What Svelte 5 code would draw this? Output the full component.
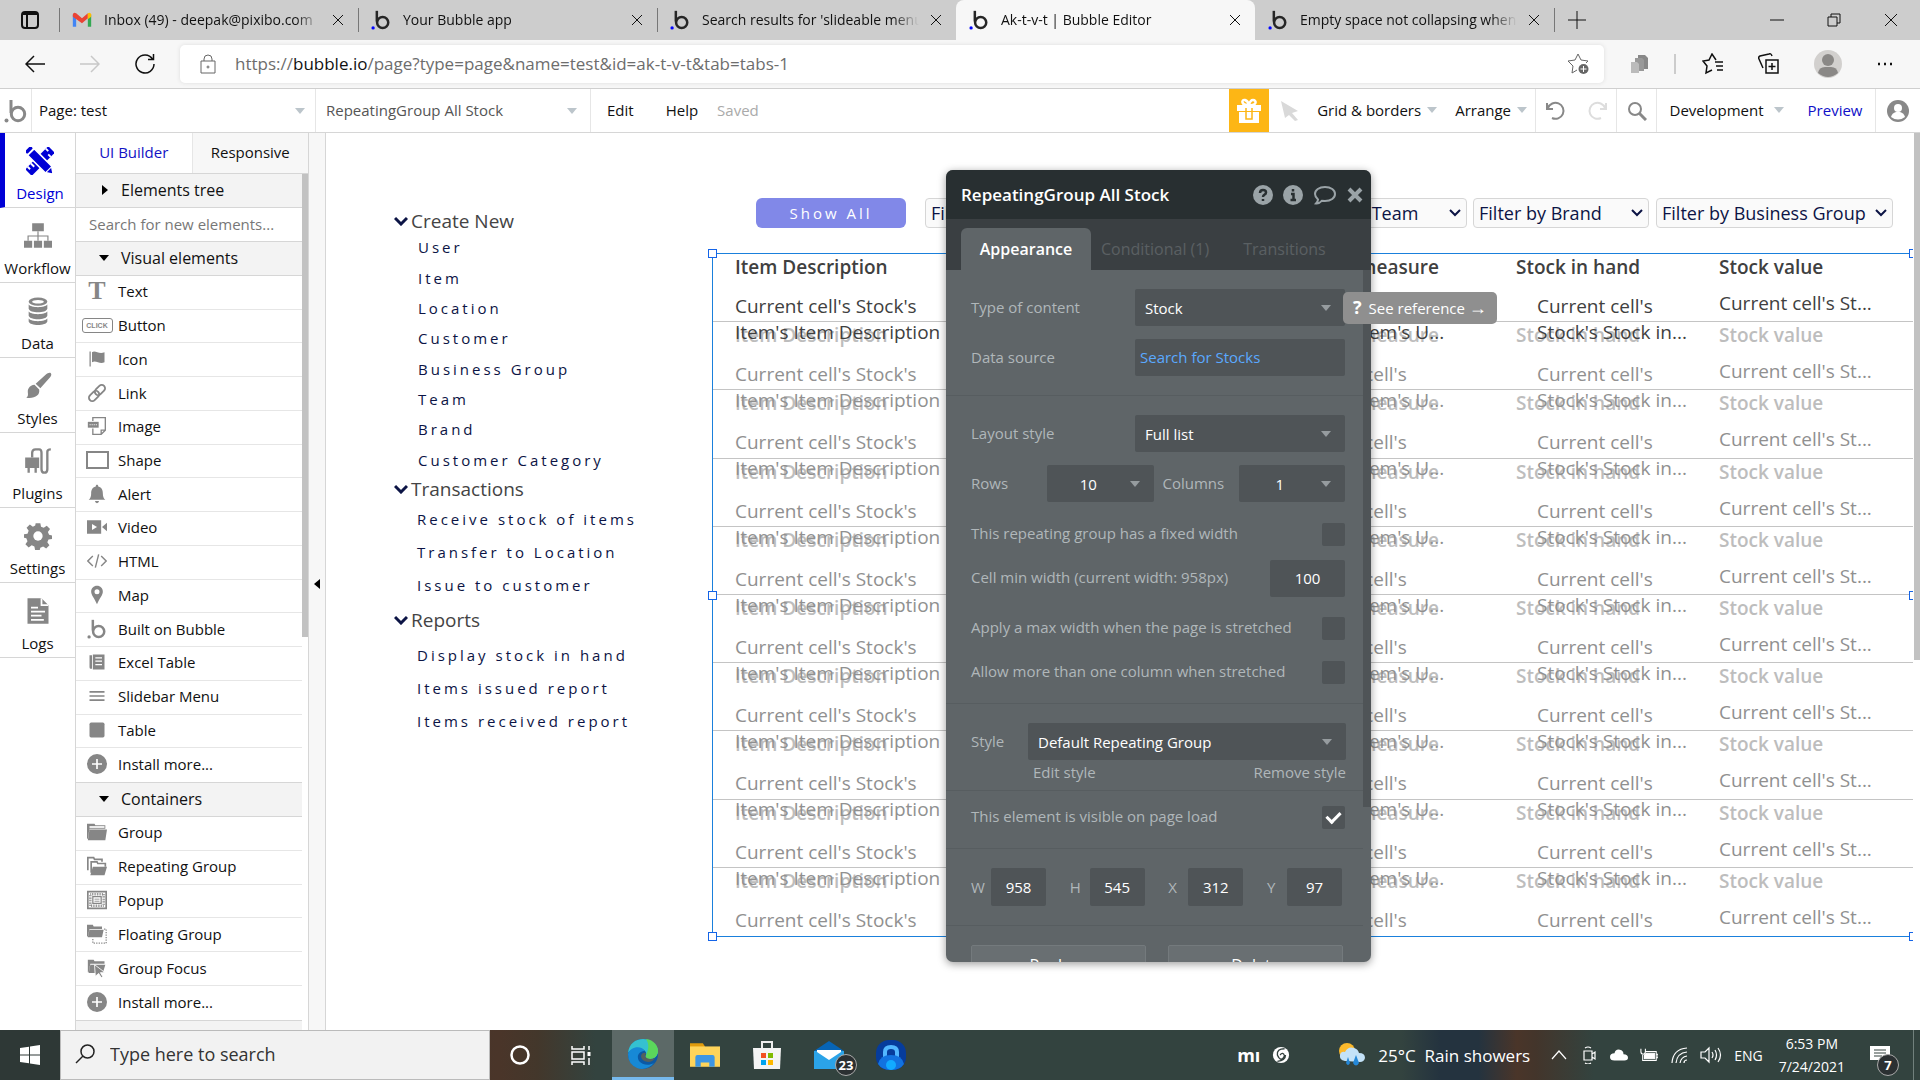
<script>
	const browserTabs = [
		{ icon: "gmail", title: "Inbox (49) - deepak@pixibo.com" },
		{ icon: "bubble", title: "Your Bubble app" },
		{ icon: "bubble", title: "Search results for 'slideable menu" },
		{ icon: "bubble", title: "Ak-t-v-t | Bubble Editor", active: true },
		{ icon: "bubble", title: "Empty space not collapsing when", plain: true },
	];

	const sections = ["Design", "Workflow", "Data", "Styles", "Plugins", "Settings", "Logs"];

	const visualElements = [
		"Text",
		"Button",
		"Icon",
		"Link",
		"Image",
		"Shape",
		"Alert",
		"Video",
		"HTML",
		"Map",
		"Built on Bubble",
		"Excel Table",
		"Slidebar Menu",
		"Table",
		"Install more...",
	];

	const containers = [
		"Group",
		"Repeating Group",
		"Popup",
		"Floating Group",
		"Group Focus",
		"Install more...",
	];

	const menu = [
		{
			name: "Create New",
			size: "small",
			items: [
				"User",
				"Item",
				"Location",
				"Customer",
				"Business Group",
				"Team",
				"Brand",
				"Customer Category",
			],
		},
		{
			name: "Transactions",
			size: "medium",
			items: ["Receive stock of items", "Transfer to Location", "Issue to customer"],
		},
		{
			name: "Reports",
			size: "large",
			items: ["Display stock in hand", "Items issued report", "Items received report"],
		},
	];

	const columns = [
		{ name: "Item Description", kind: "item", lines: ["Current cell's Stock's", "Item's Item Description"] },
		{ name: "Unit of measure", kind: "unit", lines: ["Current cell's", "Stock's Item's U..."] },
		{ name: "Stock in hand", kind: "hand", lines: ["Current cell's", "Stock's Stock in..."] },
		{ name: "Stock value", kind: "value", lines: ["Current cell's St..."] },
	];

	// all drawn in a 24x24 box
	const glyphs = {
		Design:
			'<g transform="rotate(45 12 12)"><path d="M8 -2h8v28H8z"/><path d="M8 1h3M8 19h4M8 23h3M16 3h-3" stroke="#fff" stroke-width="1.6"/></g><g transform="rotate(-45 12 12)"><path d="M8 1h8v21l-4 6-4-6z" stroke="#fff" stroke-width="1.4"/><path d="M8 22.500h8" stroke="#fff"/><rect x="8.500" y="-3" width="7" height="3" rx="1"/></g>',
		Workflow:
			'<path d="M7 1h10v7H7zM0 16h7v6H0zM8.500 16h7v6h-7zM17 16h7v6h-7z"/><path d="M12 8v8M3.500 16v-4h17v4" fill="none" stroke="currentColor"/>',
		Data: '<ellipse cx="12" cy="4" rx="8" ry="3.500"/><ellipse cx="12" cy="4" rx="5" ry="1.500" fill="#fff"/><path d="M4 6.500c2 3 14 3 16 0v3.500c-1 4-15 4-16 0zM4 12.500c2 3 14 3 16 0V16c-1 4-15 4-16 0zM4 18.500c2 3 14 3 16 0V21c-1 4-15 4-16 0z"/>',
		Styles:
			'<path d="M23 1c1 1 0 3-1 4l-8 9-4-4 9-8c1-1 3-2 4-1zM9 11l4 4c1 5-4 8-11 7 3-2 0-5 2-8 1-2 3-3 5-3z"/>',
		Plugins:
			'<path d="M1 9h12v9h-2v4H9v-4H5v4H3v-4H1z"/><path d="M7 9V5q0-3 3-3h3q2 0 2 3v14q0 3 2.500 3t2.500-3V4q0-2 3-2" fill="none" stroke="currentColor" stroke-width="2"/>',
		Settings:
			'<path d="M10 1h4l.6 3 2.300 1 2.600-1.800 2.800 2.800L20.500 8.600l1 2.400 2.500.5v3l-3 .6-1 2.300 1.800 2.600-2.800 2.800-2.600-1.800-2.400 1-.5 2h-4l-.6-3-2.300-1L4 21.800 1.200 19 3 16.400 2 14 0 13.500v-3L3 10l1-2.400L2.200 5 5 2.200 7.600 4l2-1z"/><circle cx="12" cy="12" r="4" fill="#fff"/>',
		Logs: '<path d="M3 1h12l6 6v16H3z"/><path d="M15 1v6h6M6 9h6M6 12.500h12M6 16h9M6 19.500h11" fill="none" stroke="#fff" stroke-width="1.500"/>',
		Icon: '<path d="M3 3h1.500v18H3zM6 4c4-3 8 3 15 0v12c-6 3-10-3-15 0z"/>',
		Link: '<g fill="none" stroke="currentColor" stroke-width="2.200" transform="rotate(-45 12 12)"><rect x="0" y="8" width="14" height="8" rx="4"/><rect x="10" y="8" width="14" height="8" rx="4"/></g>',
		Image:
			'<path d="M7 6V2h15v15l-5 5H7v-7M17 22v-5h5" fill="none" stroke="currentColor" stroke-width="1.600"/><path d="M1 7h13v7H1z"/><path d="M3 10.500h9" stroke="#fff" stroke-dasharray="1.500 1"/>',
		Alert: '<path d="M12 1c1 0 1.500.7 1.500 2C18 4 19 8 19 11c0 4 1 6 3 8H2c2-2 3-4 3-8 0-3 1-7 5.500-8 0-1.300.5-2 1.500-2zM9.500 20.500h5q-.5 2.500-2.500 2.500t-2.500-2.500z"/>',
		Video:
			'<path d="M0 4h17v16H0zM18 12l6-5v10z"/><path d="M6 8.500l6 3.500-6 3.500z" fill="#fff"/>',
		HTML: '<path d="M7 6L1 12l6 6M17 6l6 6-6 6M14 4l-4 16" fill="none" stroke="currentColor" stroke-width="1.700"/>',
		Map: '<path fill-rule="evenodd" d="M12 1c4 0 7 3 7 7 0 4-4 8-7 15C9 16 5 12 5 8c0-4 3-7 7-7zm0 4a3 3 0 100 6 3 3 0 000-6z"/>',
		bubble:
			'<path d="M7 1v13" stroke="currentColor" stroke-width="3" fill="none"/><circle cx="14" cy="15" r="6.700" stroke="currentColor" stroke-width="3" fill="none"/><circle class="dot" cx="2.500" cy="21.500" r="2"/>',
		"Excel Table":
			'<path d="M3 4h3v16H4q-1 0-1-2zM7 3h14v18H7z"/><path d="M10 7h8M10 11h8M10 15h8" stroke="#fff" stroke-width="1.500"/>',
		"Slidebar Menu": '<path d="M3 6h18v2H3zM3 11h18v2H3zM3 16h18v2H3z"/>',
		Table: '<rect x="3" y="3" width="18" height="18" rx="2"/>',
		"Install more...":
			'<circle cx="12" cy="12" r="12"/><path d="M12 6v12M6 12h12" stroke="#fff" stroke-width="2"/>',
		Group: '<path d="M0 2h9l1 2h12v4H3L1 20H0zM3 9h21l-2 13H1z"/><path d="M3 5h18v2H3z" fill="#fff"/>',
		"Repeating Group":
			'<path d="M1 17V2h7l1 2h9v3M5 20V7h7l1 2h9v4" fill="none" stroke="currentColor" stroke-width="2"/><path d="M7 13h17l-3 10H4z"/>',
		Popup:
			'<path d="M1 2h22v20H1z" fill="none" stroke="currentColor" stroke-width="2"/><path d="M4 5h16v14H4z" fill="none" stroke="currentColor" stroke-width="3" stroke-dasharray="1 1"/><path d="M7 8h10v8H7z" fill="#fff" stroke="currentColor" stroke-width="1.500"/><path d="M9 11h6M9 13.500h6" stroke="currentColor"/>',
		"Floating Group":
			'<path d="M0 1h7l1 2h10v3H3L1 15H0zM3 7h17l-2 9H1z"/><path d="M7 18v5h16V6h-3" fill="none" stroke="currentColor" stroke-width="1.500" stroke-dasharray="1.500 1.500"/>',
		"Group Focus":
			'<path d="M1 2h7l1 2h12v3H4L2 17H1zM4 8h18l-3 10H2z"/><path d="M9 8l12 9-5 .5 3 5-2 1-3-5-4 3.500z" stroke="#fff"/>',
		gmail:
			'<path d="M1 6v14h4V10z" fill="#4285f4"/><path d="M23 6v14h-4V10z" fill="#34a853"/><path d="M1 5q1-3 4-1l7 6 7-6v6l-7 6L1 8z" fill="#ea4335"/><path d="M19 4q3-2 4 1v3l-4 3z" fill="#fbbc04"/>',
	};

	const settings = [
		{ id: "fixed", label: "This repeating group has a fixed width" },
		{ id: "max", label: "Apply a max width when the page is stretched" },
		{ id: "more", label: "Allow more than one column when stretched" },
	];

	let section = $state("Design");
	let search = $state("");
	let visible = $state(true);
	let checks = $state({ fixed: false, max: false, more: false });
	let minWidth = $state("100");
	let box = $state({ W: "958", H: "545", X: "312", Y: "97" });
</script>

{#snippet glyph(name, cls = "")}
	<svg class="glyph {cls}" viewBox="0 0 24 24" aria-hidden="true">{@html glyphs[name]}</svg>
{/snippet}

{#snippet elementRow(name)}
	<li>
		<span class="element-icon">
			{#if name === "Text"}
				<b class="letter-t">T</b>
			{:else if name === "Button"}
				<b class="click">CLICK</b>
			{:else if name === "Shape"}
				<i class="shape"></i>
			{:else if name === "Built on Bubble"}
				{@render glyph("bubble")}
			{:else}
				{@render glyph(name)}
			{/if}
		</span>
		{name}
	</li>
{/snippet}

{#snippet dropdown(id, value, cls = "")}
	<span class="dropdown {cls}">
		<select {id} aria-label={value}><option>{value}</option></select>
	</span>
{/snippet}

{#snippet check(id)}
	<label class="setting" for={id}>
		<span>{settings.find((s) => s.id === id).label}</span>
		<input type="checkbox" {id} bind:checked={checks[id]} />
	</label>
{/snippet}

{#snippet filter(name, cls)}
	<span class="filter {cls}">
		<select aria-label={name}><option>{name}</option></select>
		<svg viewBox="0 0 12 8"><path d="M1 1l5 5 5-5" /></svg>
	</span>
{/snippet}

<div class="app">
	<header class="tab-strip">
		<svg class="tab-actions" viewBox="0 0 20 20"><rect x="2" y="2" width="16" height="16" rx="3" /><path d="M2 4h16M7 5v13" /></svg>
		{#each browserTabs as tab}
			<div class="tab" class:active={tab.active} class:plain={tab.plain}>
				{@render glyph(tab.icon, "favicon")}
				<span class="tab-title">{tab.title}</span>
				<button class="icon-button" aria-label="Close tab">
					<svg class="close" viewBox="0 0 10 10"><path d="M0 0l10 10M10 0L0 10" /></svg>
				</button>
			</div>
		{/each}
		<button class="icon-button new-tab" aria-label="New tab">
			<svg viewBox="0 0 18 18"><path d="M9 0v18M0 9h18" /></svg>
		</button>
		<div class="window-controls">
			<svg viewBox="0 0 14 14"><path d="M0 7h14" /></svg>
			<svg viewBox="0 0 14 14"><path d="M1 4h9v9H1zM4 4V1h9v9h-3" /></svg>
			<svg viewBox="0 0 14 14"><path d="M1 1l12 12M13 1L1 13" /></svg>
		</div>
	</header>

	<div class="browser-bar">
		<button class="icon-button" aria-label="Back"><svg class="nav" viewBox="0 0 20 20"><path d="M20 10H1M9 2l-8 8 8 8" /></svg></button>
		<button class="icon-button faded" aria-label="Forward"><svg class="nav" viewBox="0 0 20 20"><path d="M0 10h19M11 2l8 8-8 8" /></svg></button>
		<button class="icon-button" aria-label="Reload"><svg class="nav" viewBox="0 0 20 20"><path d="M17.500 5a9 9 0 101.500 5M18.500 0v5.500H13" /></svg></button>
		<div class="address">
			<svg class="lock" viewBox="0 0 16 20"><path d="M1 7h14v12H1zM4 7V5a4 4 0 018 0v2" /><circle cx="8" cy="13" r="1" /></svg>
			<span class="url">https://<b>bubble.io</b>/page?type=page&amp;name=test&amp;id=ak-t-v-t&amp;tab=tabs-1</span>
			<svg class="star-add" viewBox="0 0 22 22"><path d="M9 17l-5 3 1-7-5-5 7-1 3-6 3 6 7 1-2 2" /><circle cx="15.500" cy="16" r="5" class="solid" /><path class="plus" d="M15.500 13v6M12.500 16h6" /></svg>
		</div>
		<div class="browser-tools">
			<svg class="copies" viewBox="0 0 20 20"><path d="M8 1h7l3 3v11H8z" fill="#888" /><path d="M5 4h7l2 2v11H5z" fill="#999" /><path d="M1 8h6l2 2v9H1z" fill="#bbb" /></svg>
			<i class="divider"></i>
			<svg viewBox="0 0 22 22"><path d="M14 7l-4-6-3 6-6 1 4 5-1 7 6-3M13 9h8M14 13h7M15 17h6" /></svg>
			<svg viewBox="0 0 22 22"><path d="M8 7h12v13H8zM14 10v7M10.500 13.500h7M5 15L1 6q-1-2 1-3l9-2q2-1 3 2" /></svg>
			<svg class="avatar" viewBox="0 0 28 28"><circle cx="14" cy="14" r="14" fill="#d2d0ce" /><circle cx="14" cy="10" r="6" fill="#8a8886" /><path d="M4 23q1-6 7-6h6q6 0 7 6-10 8-20 0z" fill="#8a8886" /></svg>
			<svg viewBox="0 0 22 22"><path d="M4 11h2M10 11h2M16 11h2" stroke-width="2.500" /></svg>
		</div>
	</div>

	<div class="editor-bar">
		<span class="logo">{@render glyph("bubble")}</span>
		<span class="picker page">{@render dropdown("page", "Page: test")}</span>
		<span class="picker element">{@render dropdown("element", "RepeatingGroup All Stock")}</span>
		<nav class="menus">
			<a href="#edit">Edit</a>
			<a href="#help">Help</a>
			<span class="saved">Saved</span>
		</nav>
		<div class="editor-tools">
			<span class="gift"><svg viewBox="0 0 26 26"><path d="M1 7h24v6H1zM3 14h20v11H3z" fill="#fff" /><path d="M13 7C5 8 5 1 9 2q3 1 4 5c1-4 2-5 4-5 4 0 4 6-4 5" fill="none" stroke="#fff" stroke-width="2.500" /><path d="M10 10v11h6V10" fill="none" stroke="#fdb615" stroke-width="1.500" /></svg></span>
			<svg class="cursor" viewBox="0 0 18 20"><path d="M0 0l17 10-6 2 6 7-3 1-6-6-4 3z" fill="#d9d9d9" /></svg>
			<button class="text-button grid-menu">Grid &amp; borders</button>
			<button class="text-button arrange-menu">Arrange</button>
			<span class="tool-cell undo">
				<svg viewBox="0 0 20 20"><path d="M2 7a8 8 0 11 4 10M1 2v6h6" /></svg>
				<svg class="redo" viewBox="0 0 20 20"><path d="M18 7a8 8 0 10-4 10M19 2v6h-6" /></svg>
			</span>
			<span class="tool-cell find"><svg viewBox="0 0 20 20"><circle cx="8" cy="8" r="6" /><path d="M12 12l7 7" stroke-width="3" /></svg></span>
			<span class="tool-cell version">
				<button class="text-button development">Development</button>
				<a class="preview" href="#preview">Preview</a>
			</span>
			<span class="tool-cell account"><svg viewBox="0 0 22 22"><circle cx="11" cy="11" r="11" fill="#888" stroke="none" /><circle cx="11" cy="8" r="4" fill="#fff" stroke="none" /><path d="M4 17q1-4 5-5h4q4 1 5 5-7 5-14 0z" fill="#fff" stroke="none" /></svg></span>
		</div>
	</div>

	<div class="workspace">
		<nav class="sections">
			{#each sections as name}
				<button class="section" class:current={section === name} onclick={() => (section = name)}>
					{@render glyph(name)}
					{name}
				</button>
			{/each}
		</nav>

		<aside class="palette">
			<div class="palette-tabs">
				<button class="chosen">UI Builder</button>
				<button>Responsive</button>
			</div>
			<div class="palette-body">
				<div class="palette-list">
					<h2 class="closed">Elements tree</h2>
					<input class="search" type="text" aria-label="Search" placeholder="Search for new elements..." bind:value={search} />
					<h2>Visual elements</h2>
					<ul class="visual">
						{#each visualElements as name}
							{@render elementRow(name)}
						{/each}
					</ul>
					<h2 class="ruled">Containers</h2>
					<ul class="containers">
						{#each containers as name}
							{@render elementRow(name)}
						{/each}
					</ul>
					<h2 class="ruled">Input forms</h2>
				</div>
				<div class="rail"><i></i></div>
			</div>
		</aside>
		<button class="collapse" aria-label="Collapse panel"></button>

		<main class="canvas">
			<nav class="app-menu">
				{#each menu as group}
					<h3 class={group.size}>
						<svg viewBox="0 0 14 10"><path d="M1 2l6 6 6-6" /></svg>
						{group.name}
					</h3>
					<ul class={group.size}>
						{#each group.items as item}
							<li>{item}</li>
						{/each}
					</ul>
				{/each}
			</nav>

			<div class="stock">
				<div class="filters">
					<button class="show-all">Show All</button>
					{@render filter("Filter by Location", "location")}
					{@render filter("Filter by Team", "team")}
					{@render filter("Filter by Brand", "brand")}
					{@render filter("Filter by Business Group", "business")}
				</div>
				<div class="repeating-group">
					{#each Array(10) as _, i}
						<div class="cell" class:ghost={i > 0}>
							{#each columns as column}
								<div class="column {column.kind}">
									<strong>{column.name}</strong>
									<p>
										{#each column.lines as line}
											<span>{line}</span>
										{/each}
									</p>
								</div>
							{/each}
						</div>
					{/each}
					<i class="handle top left"></i>
					<i class="handle middle left"></i>
					<i class="handle bottom left"></i>
					<i class="handle top right"></i>
					<i class="handle middle right"></i>
					<i class="handle bottom right"></i>
				</div>
			</div>
			<div class="canvas-rail"></div>

			<section class="editor">
				<header>
					<h1>RepeatingGroup All Stock</h1>
					<svg viewBox="0 0 20 20"><circle cx="10" cy="10" r="10" /><path class="cut" d="M7 8q0-3 3-3t3 2.500q0 1.500-1.500 2.200T10 12M10 14v2" /></svg>
					<svg viewBox="0 0 20 20"><circle cx="10" cy="10" r="10" /><path class="cut" d="M10 4v2.500M8 9h2.500v6M7.500 15h5.500" /></svg>
					<svg class="comment" viewBox="0 0 24 20"><path d="M12 2c6 0 10 3 10 7s-4 7-10 7l-3-.3Q6 19 3 18.500q2-2 2-4Q2 12 2 9c0-4 4-7 10-7z" /></svg>
					<button class="icon-button" aria-label="Close editor"><svg class="dismiss" viewBox="0 0 16 16"><path d="M2 2l12 12M14 2L2 14" /></svg></button>
				</header>
				<div class="editor-tabs">
					<button class="chosen">Appearance</button>
					<button>Conditional (1)</button>
					<button>Transitions</button>
				</div>
				<div class="editor-body">
					<div class="fields">
						<div class="block source">
							<div class="field"><label for="type">Type of content</label>{@render dropdown("type", "Stock")}</div>
							<div class="field"><span>Data source</span><a class="expression" href="#source">Search for Stocks</a></div>
						</div>
						<div class="block layout">
							<div class="field"><label for="layout">Layout style</label>{@render dropdown("layout", "Full list")}</div>
							<div class="field pair">
								<label for="rows">Rows</label>{@render dropdown("rows", "10", "count")}
								<label for="cols">Columns</label>{@render dropdown("cols", "1", "count")}
							</div>
							{@render check("fixed")}
							<div class="setting min-width">
								<label for="min">Cell min width (current width: 958px)</label>
								<input id="min" type="text" bind:value={minWidth} />
							</div>
							{@render check("max")}
							{@render check("more")}
						</div>
						<div class="block style-block">
							<div class="field"><label for="style">Style</label>{@render dropdown("style", "Default Repeating Group", "wide")}</div>
							<div class="style-links"><a href="#edit-style">Edit style</a><a href="#remove-style">Remove style</a></div>
						</div>
						<div class="block visibility">
							<label class="setting" for="visible">
								<span>This element is visible on page load</span>
								<input type="checkbox" id="visible" bind:checked={visible} />
							</label>
						</div>
						<div class="block size">
							{#each Object.keys(box) as key}
								<label>{key}<input type="text" bind:value={box[key]} /></label>
							{/each}
						</div>
						<div class="block actions">
							<button>Replace</button>
							<button>Delete</button>
						</div>
					</div>
				</div>
			</section>
			<div class="tooltip"><b>?</b>See reference <span>→</span></div>
		</main>
	</div>

	<footer class="taskbar">
		<button class="start" aria-label="Start"><svg viewBox="0 0 20 20"><path d="M0 3l9-1.300V9.500H0zM10 1.500L20 0v9.500H10zM0 10.500h9v7.800L0 17zM10 10.500h10V20l-10-1.500z" /></svg></button>
		<label class="task-search">
			<svg viewBox="0 0 20 20"><circle cx="12.500" cy="7.500" r="6.500" /><path d="M8 12l-7 7" /></svg>
			<input type="text" aria-label="Search Windows" placeholder="Type here to search" />
		</label>
		<div class="apps">
			<span class="task-app"><svg viewBox="0 0 24 24"><circle cx="12" cy="12" r="8.500" fill="none" stroke="#fff" stroke-width="2.500" /></svg></span>
			<span class="task-app"><svg viewBox="0 0 24 24" fill="none" stroke="#fff" stroke-width="1.500"><path d="M3 3v3h12V3M3 9h12v7H3zM3 22v-3h12v3M20 3v4M20 15v7" /><path d="M20 9v4" stroke-width="3" /></svg></span>
			<span class="task-app open">
				<svg viewBox="0 0 30 30">
					<circle cx="15" cy="15" r="15" fill="#0c59a4" />
					<path d="M0 14C1 5 7 0 15 0s15 6 15 12c0 5-4 8-8 8s-5-2-4-4-1-6-6-6-10 1-12 4z" fill="#35c1d0" />
					<path d="M18 0c8 1 12 7 12 12 0 5-4 8-8 8s-5-2-4-4c2-4 4-10 0-16z" fill="#5bd75b" />
					<path d="M0 15c2-8 14-9 17-3-6 0-9 5-6 10 3 4 10 5 15 2-5 6-12 7-17 5Q0 25 0 15z" fill="#1789d6" />
					<path d="M18 14q-3 5 4 6 3 0 5-1-2 4-7 4-7-1-7-6 1-4 5-3z" fill="#54615f" />
				</svg>
			</span>
			<span class="task-app"><svg viewBox="0 0 28 28"><path d="M0 3h12l2 3v4H0z" fill="#e19b0c" /><path d="M0 6h28v19H0z" fill="#ffd45a" /><path d="M5 25v-9q0-2 2-2h14q2 0 2 2v9h-5v-4h-8v4z" fill="#3d96e4" /></svg></span>
			<span class="task-app"><svg viewBox="0 0 30 30"><path d="M10 9V2h10v7" fill="none" stroke="#eee" stroke-width="2" /><path d="M1 8h28l-1 21H2z" fill="#f4f4f4" /><path d="M9 13h5v5H9z" fill="#f25022" /><path d="M16 13h5v5h-5z" fill="#7fba00" /><path d="M9 20h5v5H9z" fill="#00a4ef" /><path d="M16 20h5v5h-5z" fill="#ffb900" /></svg></span>
			<span class="task-app">
				<svg viewBox="0 0 30 30"><path d="M0 11L15 1l15 10z" fill="#0764b5" /><path d="M0 11h30v18H0z" fill="#2ba3e8" /><path d="M3 10h24v2L15 20 3 12z" fill="#fff" /></svg>
				<b class="count-badge">23</b>
			</span>
			<span class="task-app"><svg viewBox="0 0 30 30"><rect width="30" height="30" rx="13" fill="#063c9c" /><path d="M7 17v-5q0-7 8-7t8 7v5h-4v-5q0-3-4-3t-4 3v5z" fill="#52b7ff" /><path d="M2 24q2-9 13-9t13 9q-4 6-13 6T2 24z" fill="#1272e0" /><circle cx="15" cy="25" r="5" fill="#12aaff" /></svg></span>
		</div>
		<div class="tray">
			<b class="mi">mı</b>
			<svg class="swirl" viewBox="0 0 20 20"><circle cx="10" cy="10" r="9" fill="#fff" /><path d="M14 3q-9 0-8 7 4 9 8 1-2-5-5-1M6 17q9-1 9-7" fill="none" stroke="#34423f" stroke-width="1.500" /></svg>
			<svg class="weather" viewBox="0 0 28 24"><circle cx="9" cy="8" r="8" fill="#fcb92c" /><path d="M7 18q-6-1-5-6 1-4 5-3 3-6 9-4 4 1 5 5 6 0 6 5-1 4-5 4z" fill="#c4e2f8" /><path d="M10 14l-2 6q2 4 4 0zM18 12l-3 8q3 5 6 0z" fill="#2588d8" /></svg>
			<span class="forecast">25°C&nbsp; Rain showers</span>
			<svg viewBox="0 0 18 18"><path d="M2 13l7-8 7 8" /></svg>
			<svg viewBox="0 0 18 18"><path d="M4 5h8v9H4zM12 8l3-2v7l-3-2M5 2q3-2 6 0M5 17q3 2 6 0" /></svg>
			<svg class="cloud" viewBox="0 0 20 18"><path d="M5 15q-5 0-5-4t5-4q1-5 6-4 4 1 4 5 5 0 5 4 0 3-4 3z" fill="#fff" stroke="none" /></svg>
			<svg viewBox="0 0 20 18"><path d="M6 5h12v10H3V9M1 2v3q0 3 2.500 3T6 5V2M18 8h2v4h-2" /><path d="M7 7h9v6H5V9z" fill="#fff" /></svg>
			<svg viewBox="0 0 18 18"><path d="M2 17Q3 3 17 2M6 17Q7 7 17 6M10 17q1-6 7-7M14 17q0-3 3-3" /></svg>
			<svg class="volume" viewBox="0 0 22 18"><path d="M1 6h4l4-4v14l-4-4H1zM12 6q2 3 0 6M15 4q3 5 0 10M18 2q5 7 0 14" /></svg>
			<span class="language">ENG</span>
			<span class="clock">6:53 PM<br />7/24/2021</span>
			<span class="notices">
				<svg viewBox="0 0 20 20"><path d="M0 1h20v14h-8l-4 4v-4H0z" fill="#fff" stroke="none" /><path d="M4 5h12M4 8h12M4 11h8" stroke="#34423f" /></svg>
				<b class="count-badge">7</b>
			</span>
		</div>
	</footer>
</div>

<style>
	:global(body) {
		overflow: hidden;
	}
	.app {
		height: 100vh;
		display: flex;
		flex-direction: column;
		overflow: hidden;
		background: #fff;
		color: #111;
		font-family: "Open Sans", "Noto Sans", sans-serif;
		font-size: 15px;
	}
	.app :global(*) {
		box-sizing: border-box;
	}
	button,
	input,
	select {
		margin: 0;
		padding: 0;
		border: 0;
		background: none;
		color: inherit;
		font: inherit;
	}
	a {
		color: inherit;
		text-decoration: none;
	}
	ul,
	h1,
	h2,
	h3,
	p {
		margin: 0;
		padding: 0;
		list-style: none;
		font-weight: 400;
	}
	svg {
		flex: none;
		display: block;
	}
	.glyph {
		width: 20px;
		height: 20px;
		fill: currentColor;
	}
	.icon-button {
		display: flex;
	}

	/* browser chrome */
	.tab-strip {
		flex: none;
		height: 40px;
		display: flex;
		align-items: center;
		background: #cdcdcd;
		font-size: 14px;
	}
	.tab-strip svg:not(.glyph),
	.browser-bar svg {
		fill: none;
		stroke: #111;
	}
	.tab-actions {
		width: 20px;
		margin: 0 19px 0 20px;
		stroke-width: 2;
	}
	.tab {
		flex: 0 1 299px;
		min-width: 0;
		height: 40px;
		display: flex;
		align-items: center;
		gap: 12px;
		padding-right: 15px;
	}
	.tab::before,
	.new-tab::before {
		content: "";
		width: 1px;
		height: 24px;
		background: #777;
	}
	.tab.active {
		background: #f7f7f7;
		border-radius: 8px 8px 0 0;
	}
	.tab.active::before,
	.tab.plain::before {
		background: none;
	}
	.favicon {
		color: #262626;
	}
	.favicon :global(.dot) {
		fill: #0205ff;
	}
	.tab-title {
		flex: 1;
		padding-bottom: 2px;
		overflow: hidden;
		white-space: nowrap;
		mask-image: linear-gradient(to right, #000 88%, transparent);
	}
	.close {
		width: 10px;
		stroke-width: 1;
	}
	.new-tab {
		align-items: center;
		gap: 13px;
	}
	.new-tab svg {
		width: 18px;
	}
	.window-controls {
		margin-left: auto;
		display: flex;
		gap: 43px;
		padding-right: 22px;
	}
	.window-controls svg {
		width: 14px;
	}
	.browser-bar {
		flex: none;
		height: 49px;
		display: flex;
		align-items: center;
		padding-left: 25px;
		background: #f7f7f7;
		border-bottom: 1px solid #cfcfcf;
	}
	.browser-bar .icon-button {
		margin-right: 35px;
	}
	.browser-bar .icon-button:nth-child(3) {
		margin-right: 25px;
	}
	.browser-bar .nav {
		width: 20px;
		stroke-width: 1.5;
	}
	.faded {
		opacity: 0.2;
	}
	.address {
		flex: 1;
		height: 38px;
		display: flex;
		align-items: center;
		gap: 19px;
		padding: 0 14px 0 20px;
		background: #fff;
		border-radius: 5px;
		box-shadow: 0 0 4px #ddd;
		color: #6d6d6d;
		font-size: 17px;
	}
	.address .lock {
		width: 16px;
		stroke: #666;
	}
	.url {
		flex: 1;
		padding-bottom: 2px;
	}
	.url b {
		color: #111;
		font-weight: 400;
	}
	.address .star-add {
		width: 22px;
		stroke: #666;
	}
	.star-add .solid {
		fill: #666;
		stroke: none;
	}
	.star-add .plus {
		stroke: #fff;
	}
	.browser-tools {
		display: flex;
		align-items: center;
		gap: 34px;
		padding: 0 24px 0 26px;
	}
	.browser-tools svg {
		width: 22px;
		stroke-width: 1.5;
	}
	.browser-tools .copies {
		width: 20px;
		margin-right: -10px;
		stroke: none;
	}
	.browser-tools .divider {
		width: 2px;
		height: 20px;
		margin-right: -8px;
		background: #ccc;
	}
	.browser-tools .avatar {
		width: 28px;
		margin-right: -2px;
		stroke: none;
	}

	/* editor toolbar */
	.editor-bar {
		flex: none;
		height: 44px;
		display: flex;
		align-items: stretch;
		border-bottom: 1px solid #d6d6d6;
	}
	.logo {
		width: 32px;
		display: flex;
		align-items: center;
		padding-left: 4px;
		border-right: 1px solid #e6e6e6;
		color: #888;
	}
	.logo .glyph {
		width: 24px;
		height: 24px;
	}
	.dropdown {
		flex: 1;
		display: flex;
		align-items: center;
	}
	.dropdown select {
		flex: 1;
		min-width: 0;
		height: 37px;
		appearance: none;
	}
	.dropdown::after,
	.grid-menu::after,
	.arrange-menu::after,
	.development::after {
		content: "";
		border: 5px solid transparent;
		border-top: 6px solid #bcc5cb;
		border-bottom: 0;
		pointer-events: none;
	}
	.picker {
		display: flex;
		border-right: 1px solid #e6e6e6;
		padding-right: 10px;
	}
	.picker select {
		padding-bottom: 2px;
	}
	.page {
		width: 284px;
		padding-left: 7px;
	}
	.element {
		width: 275px;
		padding-left: 10px;
		padding-right: 13px;
		color: #555;
	}
	.menus {
		display: flex;
		align-items: center;
		padding: 0 0 2px 16px;
	}
	.menus a {
		margin-right: 32px;
	}
	.menus a + a {
		margin-right: 19px;
	}
	.saved {
		color: #aaa;
	}
	.editor-tools {
		margin-left: auto;
		display: flex;
		align-items: center;
	}
	.gift {
		align-self: stretch;
		width: 40px;
		display: grid;
		place-items: center;
		background: #fdb615;
	}
	.gift svg {
		width: 26px;
	}
	.cursor {
		width: 18px;
		margin: 0 18px 0 12px;
	}
	.text-button {
		display: flex;
		align-items: center;
		padding-bottom: 2px;
		white-space: nowrap;
	}
	.grid-menu {
		gap: 6px;
		margin-right: 18px;
	}
	.arrange-menu {
		gap: 6px;
		margin-right: 8px;
	}
	.tool-cell {
		align-self: stretch;
		display: flex;
		align-items: center;
		justify-content: center;
		border-left: 1px solid #e6e6e6;
	}
	.tool-cell svg {
		width: 20px;
		fill: none;
		stroke: #888;
		stroke-width: 2;
	}
	.undo {
		width: 81px;
		gap: 21px;
	}
	.undo .redo {
		stroke: #ddd;
	}
	.find {
		width: 40px;
	}
	.version {
		width: 219px;
	}
	.development {
		gap: 10px;
		margin-right: 24px;
	}
	.preview {
		padding-bottom: 2px;
		color: #1010c8;
	}
	.account {
		width: 45px;
	}
	.account svg {
		width: 22px;
	}

	/* left side */
	.workspace {
		flex: 1;
		min-height: 0;
		display: flex;
	}
	.sections {
		flex: none;
		width: 76px;
		border-right: 1px solid #d6d6d6;
	}
	.section {
		width: 100%;
		height: 75px;
		display: flex;
		flex-direction: column;
		align-items: center;
		justify-content: space-between;
		padding: 14px 0 4px;
		border-bottom: 1px solid #d6d6d6;
		font-size: 15px;
	}
	.section .glyph {
		width: 28px;
		height: 28px;
		color: #868686;
	}
	.section:nth-child(n + 2) .glyph {
		width: 30px;
	}
	.section.current,
	.section.current .glyph {
		color: #0000d6;
	}
	.section.current {
		border-left: 5px solid #0000d6;
	}
	.palette {
		flex: none;
		width: 233px;
		display: flex;
		flex-direction: column;
		border-right: 1px solid #d6d6d6;
	}
	.palette-tabs {
		flex: none;
		height: 41px;
		display: flex;
		border-bottom: 1px solid #d6d6d6;
	}
	.palette-tabs button {
		flex: 1;
		padding-bottom: 2px;
		background: #f7f7f7;
		border-left: 1px solid #e6e6e6;
	}
	.palette-tabs .chosen {
		background: #fff;
		border: 0;
		color: #1212c4;
	}
	.palette-body {
		flex: 1;
		min-height: 0;
		display: flex;
		overflow: hidden;
	}
	.palette-list {
		flex: 1;
	}
	.palette-list h2 {
		height: 34px;
		display: flex;
		align-items: center;
		padding: 0 0 2px 23px;
		background: #f3f3f3;
		border-bottom: 1px solid #d6d6d6;
		font-size: 16px;
	}
	.palette-list h2::before {
		content: "";
		margin-right: 12px;
		border: 5px solid transparent;
		border-top: 6px solid #000;
		border-bottom: 0;
	}
	.palette-list h2.closed::before {
		margin-left: 3px;
		margin-right: 13px;
		border: 5px solid transparent;
		border-left: 6px solid #000;
		border-right: 0;
	}
	.palette-list h2.ruled {
		height: 35px;
		border-top: 1px solid #d6d6d6;
	}
	.search {
		width: 100%;
		height: 34px;
		padding: 0 0 2px 13px;
		border-bottom: 1px solid #d6d6d6;
	}
	.search::placeholder {
		color: #777;
		opacity: 1;
	}
	.palette ul {
		display: grid;
		grid-auto-rows: 1fr;
	}
	.visual {
		height: 506px;
	}
	.containers {
		height: 203px;
	}
	.palette li {
		display: flex;
		align-items: center;
		padding-bottom: 2px;
		border-bottom: 1px solid #e6e6e6;
	}
	.palette li:last-child {
		border: 0;
	}
	.element-icon {
		width: 42px;
		display: grid;
		place-items: center;
		color: #868686;
	}
	.containers .element-icon .glyph {
		width: 22px;
	}
	.letter-t {
		font: 700 26px/24px "Liberation Serif", serif;
	}
	.click {
		width: 31px;
		height: 15px;
		border: 1px solid #868686;
		border-radius: 3px;
		font: 700 7px/13px "Liberation Sans", sans-serif;
		text-align: center;
	}
	.shape {
		width: 23px;
		height: 18px;
		border: 2px solid #868686;
	}
	.rail {
		width: 6px;
	}
	.rail i {
		display: block;
		height: 463px;
		background: #c2c2c2;
	}
	.collapse {
		flex: none;
		width: 17px;
		display: grid;
		place-items: center;
		padding-top: 4px;
		background: #f7f7f7;
		border-right: 1px solid #d6d6d6;
	}
	.collapse::before {
		content: "";
		border: 5px solid transparent;
		border-right: 6px solid #000;
		border-left: 0;
	}

	/* page being edited */
	.canvas {
		position: relative;
		flex: 1;
		min-width: 0;
		display: flex;
		overflow: hidden;
	}
	.app-menu {
		flex: none;
		width: 386px;
		padding: 77px 0 0 68px;
	}
	.app-menu h3 {
		display: flex;
		align-items: center;
		gap: 3px;
		color: #444;
		font-size: 19px;
	}
	.app-menu h3.small {
		height: 22px;
	}
	.app-menu h3.medium {
		height: 28px;
	}
	.app-menu h3.large {
		height: 38px;
	}
	.app-menu h3 svg {
		width: 14px;
		fill: none;
		stroke: #0c1445;
		stroke-width: 3;
	}
	.app-menu ul {
		display: grid;
		grid-auto-rows: 1fr;
		height: 98px;
		padding-left: 23px;
		color: #0c1445;
		font-size: 15px;
		letter-spacing: 3px;
	}
	.app-menu ul.small {
		height: 243px;
		padding-left: 24px;
	}
	.app-menu li {
		display: flex;
		align-items: center;
	}
	.stock {
		flex: 1;
		min-width: 0;
		padding-top: 65px;
	}
	.filters {
		display: flex;
		padding-left: 44px;
	}
	.show-all {
		width: 150px;
		height: 30px;
		margin-right: 19px;
		background: #8188e8;
		border-radius: 6px;
		color: #fff;
		font-size: 15px;
		font-weight: 500;
		letter-spacing: 3px;
	}
	.filter {
		height: 30px;
		display: flex;
		align-items: center;
		padding: 0 5px;
		border: 1px solid #d6d6d6;
		border-radius: 4px;
		background: #fafafa;
		color: #0c1445;
		font-size: 18px;
		font-weight: 500;
	}
	.filter select {
		flex: 1;
		min-width: 0;
		height: 28px;
		appearance: none;
	}
	.filter svg {
		width: 12px;
		fill: none;
		stroke: #0c1445;
		stroke-width: 2;
	}
	.location {
		width: 363px;
		margin-right: 6px;
	}
	.team {
		width: 173px;
		margin-right: 6px;
	}
	.brand {
		width: 176px;
		margin-right: 7px;
	}
	.business {
		width: 237px;
	}
	.repeating-group {
		position: relative;
		height: 684px;
		margin-top: 25px;
		display: grid;
		grid-auto-rows: minmax(0, 1fr);
		border: 1px solid #1a80dc;
		border-right: 0;
	}
	.cell {
		display: flex;
		padding-left: 22px;
		border-bottom: 1px solid #c4c4c4;
		color: #404040;
		font-size: 19px;
		line-height: 26px;
		white-space: nowrap;
	}
	.cell:nth-child(10) {
		border: 0;
		overflow: hidden;
	}
	.cell strong {
		font-weight: 600;
	}
	.ghost {
		color: #909090;
	}
	.ghost strong {
		color: #bdbdbd;
	}
	.cell p {
		position: relative;
		z-index: 1;
		margin-top: 13px;
	}
	.cell span {
		display: block;
	}
	.item {
		width: 556px;
	}
	.unit {
		width: 225px;
	}
	.hand {
		width: 203px;
	}
	.cell .hand p {
		padding-left: 21px;
	}
	.cell .value p {
		margin-top: 10px;
	}
	.handle {
		position: absolute;
		z-index: 2;
		width: 9px;
		height: 9px;
		background: #fff;
		border: 1px solid #1464e8;
	}
	.left {
		left: -5px;
	}
	.right {
		right: -5px;
	}
	.top {
		top: -5px;
	}
	.middle {
		top: calc(50% - 4px);
	}
	.bottom {
		bottom: -5px;
	}
	.canvas-rail {
		position: relative;
		z-index: 3;
		flex: none;
		width: 7px;
		background: linear-gradient(#c2c2c2, #c2c2c2) right top / 6px 527px no-repeat #fff;
	}

	/* property editor floating over the canvas */
	.editor {
		position: absolute;
		z-index: 4;
		left: 620px;
		top: 37px;
		width: 425px;
		height: 792px;
		display: flex;
		flex-direction: column;
		overflow: hidden;
		background: #5f6568;
		border-radius: 7px;
		box-shadow: 0 2px 8px #0006;
		color: #b0b7ba;
	}
	.editor header {
		flex: none;
		height: 49px;
		display: flex;
		align-items: center;
		gap: 10px;
		padding: 0 8px 0 15px;
		background: #282f31;
		color: #fff;
	}
	.editor h1 {
		flex: 1;
		font-size: 17px;
		font-weight: 600;
	}
	.editor header svg {
		width: 20px;
		fill: #9aa3a7;
	}
	.editor header .cut {
		fill: none;
		stroke: #282f31;
		stroke-width: 2.5;
	}
	.editor header .comment {
		width: 24px;
		fill: none;
		stroke: #9aa3a7;
		stroke-width: 2;
	}
	.editor header .dismiss {
		width: 16px;
		stroke: #9aa3a7;
		stroke-width: 4;
	}
	.editor-tabs {
		flex: none;
		height: 51px;
		display: flex;
		align-items: flex-end;
		padding-left: 15px;
		background: #3a3f42;
	}
	.editor-tabs button {
		height: 42px;
		padding: 0 10px;
		margin-right: 14px;
		border-radius: 6px 6px 0 0;
		color: #5a6063;
		font-size: 16px;
	}
	.editor-tabs .chosen {
		width: 130px;
		margin-right: 0;
		background: #5f6568;
		color: #fff;
		font-weight: 600;
	}
	.editor-body {
		flex: 1;
		min-height: 0;
		background: linear-gradient(#4f5457, #4f5457) right top / 8px 537px no-repeat;
	}
	.fields {
		margin-right: 8px;
	}
	.block {
		padding: 19px 18px 19px 25px;
		border-bottom: 1px solid #575d60;
	}
	.field {
		display: flex;
		align-items: center;
		height: 37px;
		margin-bottom: 13px;
	}
	.source .field:last-child {
		margin-bottom: 0;
	}
	.field > label,
	.field > span:first-child {
		width: 164px;
		padding-bottom: 2px;
	}
	.field .dropdown,
	.expression {
		flex: 1;
		height: 37px;
		padding: 0 14px 0 10px;
		background: #4f5457;
		border-radius: 2px;
		color: #fff;
	}
	.field .dropdown::after {
		border-top-color: #969c9f;
	}
	.field .expression {
		padding-left: 5px;
		color: #5aa9ff;
		line-height: 36px;
	}
	.pair > label:first-child {
		width: 76px;
	}
	.pair > label {
		width: 85px;
		padding-left: 9px;
	}
	.pair > label:first-child {
		padding-left: 0;
	}
	.field .count {
		padding: 0 14px 0 0;
	}
	.field .count select {
		text-align-last: center;
	}
	.setting {
		height: 44px;
		display: flex;
		align-items: center;
		justify-content: space-between;
	}
	.setting > span,
	.min-width label {
		padding-bottom: 2px;
	}
	.setting input {
		background: #4f5457;
		color: #fff;
	}
	.setting input[type="checkbox"] {
		appearance: none;
		width: 23px;
		height: 23px;
		display: grid;
		place-items: center;
		border-radius: 2px;
	}
	.setting input:checked::before {
		content: "";
		width: 6px;
		height: 11px;
		margin-bottom: 3px;
		border: solid #fff;
		border-width: 0 3px 3px 0;
		transform: rotate(45deg);
	}
	.layout {
		padding-bottom: 9px;
	}
	.layout .field + .setting {
		margin-top: -3px;
	}
	.min-width input {
		width: 75px;
		height: 37px;
		border-radius: 2px;
		text-align: center;
	}
	.min-width {
		margin-bottom: 6px;
	}
	.style-block {
		padding: 19px 17px 6px 25px;
	}
	.style-block .field {
		margin: 0;
	}
	.style-block .field > label {
		width: 57px;
	}
	.style-links {
		display: flex;
		justify-content: space-between;
		height: 24px;
		align-items: center;
		padding-left: 62px;
	}
	.visibility {
		padding-top: 4px;
		padding-bottom: 9px;
	}
	.size {
		display: flex;
		justify-content: space-between;
		padding-right: 21px;
	}
	.size label {
		display: flex;
		align-items: center;
		justify-content: space-between;
		width: 75px;
	}
	.size input {
		width: 55px;
		height: 38px;
		background: #4f5457;
		border-radius: 2px;
		color: #fff;
		text-align: center;
	}
	.actions {
		display: flex;
		gap: 22px;
		padding-right: 20px;
	}
	.actions button {
		flex: 1;
		height: 40px;
		background: #696f72;
		border: 1px solid #747a7d;
		border-radius: 2px;
		color: #fff;
		font-size: 16px;
	}
	.tooltip {
		position: absolute;
		z-index: 5;
		left: 1017px;
		top: 159px;
		height: 32px;
		padding: 0 10px;
		background: #8f8f8f;
		border-radius: 5px;
		color: #fff;
		line-height: 30px;
	}
	.tooltip b {
		margin-right: 7px;
		font-size: 18px;
	}
	.tooltip span {
		font-size: 18px;
	}

	/* windows taskbar */
	.taskbar {
		flex: none;
		height: 50px;
		display: flex;
		background: linear-gradient(
			90deg,
			#2e3836 0,
			#4a3529 26%,
			#43372b 28%,
			#33433f 31%,
			#33433f 73%,
			#24333f 75%,
			#24333f 77%,
			#4a3529 79%,
			#43352b 80%,
			#33433f 83%
		);
		color: #fff;
	}
	.start {
		width: 60px;
		display: grid;
		place-items: center;
		background: #2e3836;
	}
	.start svg {
		width: 20px;
		fill: #fff;
	}
	.task-search {
		width: 430px;
		display: flex;
		align-items: center;
		gap: 15px;
		padding: 0 0 2px 14px;
		background: #f2f2f2;
		border: 1px solid #bbb;
		color: #333;
		font-size: 18px;
	}
	.task-search svg {
		width: 20px;
		fill: none;
		stroke: #222;
		stroke-width: 1.5;
	}
	.task-search input {
		flex: 1;
	}
	.task-search input::placeholder {
		color: #333;
		opacity: 1;
	}
	.apps {
		display: flex;
	}
	.task-app {
		position: relative;
		width: 62px;
		display: grid;
		place-items: center;
	}
	.task-app:first-child {
		width: 60px;
	}
	.task-app svg {
		width: 30px;
	}
	.task-app:nth-child(-n + 2) svg {
		width: 24px;
	}
	.open {
		background: #5c6967;
		border-bottom: 3px solid #76b9ed;
	}
	.count-badge {
		position: absolute;
		right: 3px;
		bottom: 4px;
		min-width: 22px;
		height: 22px;
		background: #2b3032;
		border: 1px solid #aaa;
		border-radius: 11px;
		font-size: 13px;
		line-height: 20px;
		text-align: center;
	}
	.tray {
		margin-left: auto;
		display: flex;
		align-items: center;
		gap: 12px;
		padding-right: 6px;
	}
	.tray svg {
		width: 18px;
		fill: none;
		stroke: #fff;
		stroke-width: 1.2;
	}
	.mi {
		font-size: 18px;
		line-height: 20px;
	}
	.tray .swirl {
		stroke: none;
	}
	.tray .weather {
		width: 28px;
		margin-left: 36px;
		stroke: none;
	}
	.forecast {
		margin-right: 8px;
		font-size: 17px;
	}
	.tray .volume {
		width: 22px;
	}
	.language {
		margin-right: 4px;
		font-size: 14px;
	}
	.clock {
		font-size: 14px;
		line-height: 23px;
		text-align: center;
	}
	.notices {
		position: relative;
		width: 57px;
		height: 50px;
		display: grid;
		place-items: center;
		padding-right: 11px;
		border-right: 1px solid #71807c;
	}
	.notices .count-badge {
		right: 14px;
	}
	.notices svg {
		width: 20px;
	}
</style>
